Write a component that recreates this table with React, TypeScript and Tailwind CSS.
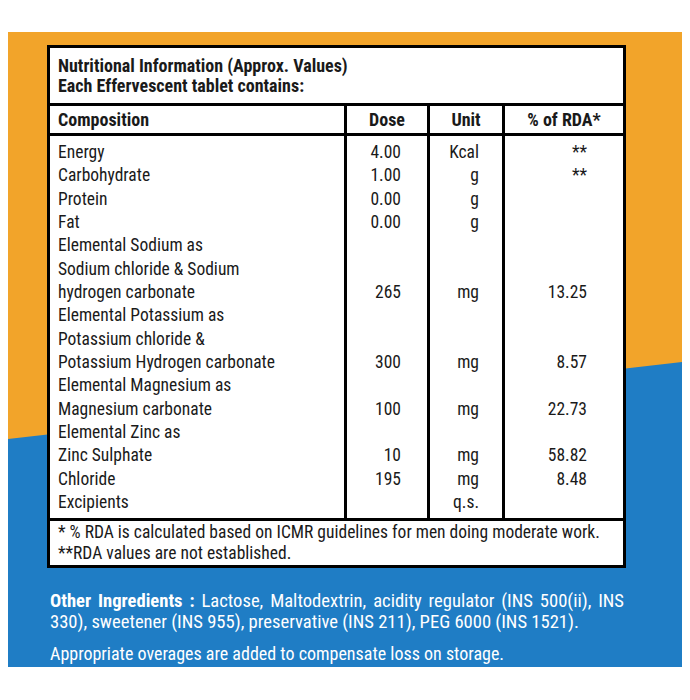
const rows = [
  { name: ["Energy"], dose: "4.00", unit: "Kcal", rda: "**" },
  { name: ["Carbohydrate"], dose: "1.00", unit: "g", rda: "**" },
  { name: ["Protein"], dose: "0.00", unit: "g", rda: "" },
  { name: ["Fat"], dose: "0.00", unit: "g", rda: "" },
  {
    name: ["Elemental Sodium as", "Sodium chloride & Sodium", "hydrogen carbonate"],
    dose: "265",
    unit: "mg",
    rda: "13.25",
  },
  {
    name: ["Elemental Potassium as", "Potassium chloride &", "Potassium Hydrogen carbonate"],
    dose: "300",
    unit: "mg",
    rda: "8.57",
  },
  { name: ["Elemental Magnesium as", "Magnesium carbonate"], dose: "100", unit: "mg", rda: "22.73" },
  { name: ["Elemental Zinc as", "Zinc Sulphate"], dose: "10", unit: "mg", rda: "58.82" },
  { name: ["Chloride"], dose: "195", unit: "mg", rda: "8.48" },
  { name: ["Excipients"], dose: "", unit: "q.s.", rda: "" },
];

const font = "font-['Roboto',sans-serif] font-stretch-[75%]";

export default function App() {
  return (
    <div className={`w-[690px] h-[700px] bg-white pt-[32px] pl-[8px] ${font}`}>
      <div className="relative w-[674px] h-[635px] bg-[#f2a42a] overflow-hidden">
        {/* diagonal blue lower half */}
        <svg
          className="absolute inset-0 w-full h-full"
          viewBox="0 0 674 635"
          preserveAspectRatio="none"
        >
          <polygon points="0,407 674,330 674,635 0,635" fill="#1f7dc5" />
        </svg>

        <div className="relative pt-[13px] pl-[39px]">
          <div className="w-[579px] border-[3px] border-black bg-white text-[#1a1a1a]">
            <div className="px-[8px] pt-[8px] pb-[7px] text-[18px] leading-[20px] font-bold">
              <div>Nutritional Information (Approx. Values)</div>
              <div>Each Effervescent tablet contains:</div>
            </div>

            <div className="grid grid-cols-[294px_83px_75px_1fr] border-t-[3px] border-b-[3px] border-black h-[33px] text-[18px] font-bold items-stretch">
              <div className="pl-[8px] flex items-center">Composition</div>
              <div className="border-l-[3px] border-black flex items-center justify-center">Dose</div>
              <div className="border-l-[3px] border-black flex items-center justify-center">Unit</div>
              <div className="border-l-[3px] border-black flex items-center justify-center">% of RDA*</div>
            </div>

            <div className="grid grid-cols-[294px_83px_75px_1fr] text-[17.5px] leading-[23.33px]">
              {rows.map((r, i) => {
                const pad = i === 0 ? "pt-[5px]" : i === rows.length - 1 ? "pb-[4px]" : "";
                return (
                  <div key={i} className="contents">
                    <div className={`pl-[8px] ${pad}`}>
                      {r.name.map((l) => (
                        <div key={l}>{l}</div>
                      ))}
                    </div>
                    <div className={`border-l-[3px] border-black flex items-end justify-end pr-[26px] ${pad}`}>
                      {r.dose}
                    </div>
                    <div className={`border-l-[3px] border-black flex items-end justify-end pr-[23px] ${pad}`}>
                      {r.unit}
                    </div>
                    <div className={`border-l-[3px] border-black flex items-end justify-end pr-[36px] ${pad}`}>
                      {r.rda}
                    </div>
                  </div>
                );
              })}
            </div>

            <div className="border-t-[3px] border-black px-[8px] pt-[1px] pb-[1px] text-[17.5px] leading-[21px]">
              <div>* % RDA is calculated based on ICMR guidelines for men doing moderate work.</div>
              <div>**RDA values are not established.</div>
            </div>
          </div>
        </div>

        <div className="relative pl-[42px] pt-[23px] w-[616px] text-white text-[18px] leading-[21px]">
          <p className="text-justify text-[18.6px]">
            <span className="font-bold">Other Ingredients :</span> Lactose, Maltodextrin, acidity regulator (INS
            500(ii), INS 330), sweetener (INS 955), preservative (INS 211), PEG 6000 (INS 1521).
          </p>
          <p className="mt-[10px]">Appropriate overages are added to compensate loss on storage.</p>
        </div>
      </div>
    </div>
  );
}
